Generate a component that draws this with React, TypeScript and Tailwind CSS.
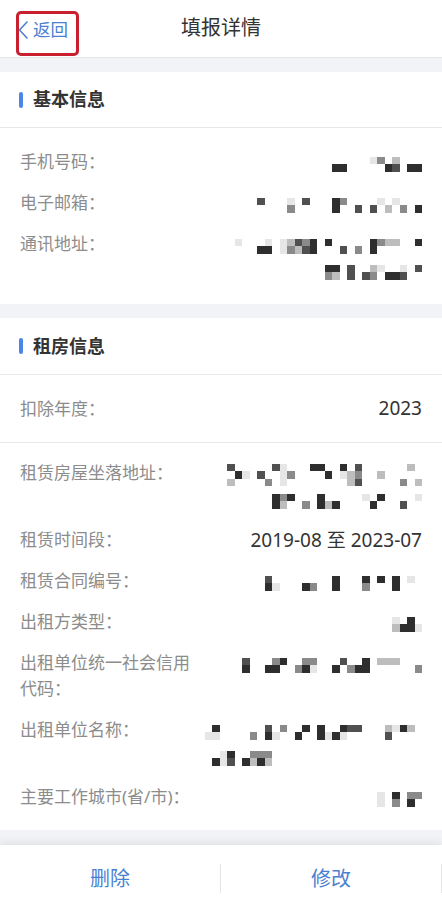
import React from 'react';

// 打码块的灰度
const shades: Record<string, string> = {
  a: 'bg-[#e6e6e6]',
  b: 'bg-[#bdbdbd]',
  c: 'bg-[#8a8a8a]',
  d: 'bg-[#505050]',
  e: 'bg-[#2e2e2e]',
};

type MosaicLine = string[];

function Mosaic({ lines }: { lines: MosaicLine[] }) {
  return (
    <div className="flex flex-col items-end">
      {lines.map((rows, i) => (
        <div key={i} className="h-[26px] flex flex-col justify-center pt-[4px]">
          {rows.map((row, j) => (
            <div key={j} className="flex">
              {row.split('').map((ch, k) => (
                <div key={k} className={`w-[7.5px] h-[7.5px] ${shades[ch] ?? ''}`} />
              ))}
            </div>
          ))}
        </div>
      ))}
    </div>
  );
}

function Row({ label, children }: { label: string; children: React.ReactNode }) {
  return (
    <div className="flex px-5 py-[7.5px]">
      <div className="w-[184px] shrink-0 text-[17px] leading-[26px] text-[#8c8c8c]">{label}</div>
      <div className="flex-1 flex justify-end">{children}</div>
    </div>
  );
}

function SectionTitle({ title, tall }: { title: string; tall?: boolean }) {
  return (
    <div className={`${tall ? 'h-[57px]' : 'h-[56px]'} flex items-center gap-[10px] px-[19px] border-b border-[#e8e8e8]`}>
      <div className="w-[4px] h-[16px] rounded-full bg-[#4a86e8]" />
      <span className="text-[18px] font-bold text-[#333]">{title}</span>
    </div>
  );
}

export default function App() {
  return (
    <div className="w-[442px] h-[912px] flex flex-col bg-[#f2f3f7] font-['Noto_Sans','Noto_Sans_CJK_SC',sans-serif] overflow-hidden">
      {/* 顶部导航 */}
      <div className="h-[58px] shrink-0 bg-white border-b border-[#e5e5e5] grid grid-cols-[1fr_auto_1fr]">
        <div className="pl-[16px] pt-[11px]">
          <div className="w-[63px] h-[45px] border-[3px] border-[#c8202f] rounded-[5px] flex items-center pb-[7px]">
            <svg className="w-[10px] h-[18px] -ml-[1px]" viewBox="0 0 10 18" fill="none" stroke="#4b7fd1" strokeWidth="1.6" strokeLinecap="round" strokeLinejoin="round">
              <path d="M9 1L1.5 9L9 17" />
            </svg>
            <span className="ml-[5px] text-[17.5px] leading-none text-[#4b7fd1]">返回</span>
          </div>
        </div>
        <div className="flex items-center pb-[1px] text-[20px] text-[#333]">填报详情</div>
        <div />
      </div>

      <div className="h-[14px] shrink-0" />

      {/* 基本信息 */}
      <div className="bg-white shrink-0">
        <SectionTitle title="基本信息" />
        <div className="pt-[13.5px] pb-[13.5px]">
          <Row label="手机号码：">
            <Mosaic lines={[['.....ac.b...', 'ee.....ed.ee']]} />
          </Row>
          <Row label="电子邮箱：">
            <Mosaic lines={[['d...a.d...ec....a.a...', '....c.....e..d.d.b.c.e']]} />
          </Row>
          <Row label="通讯地址：">
            <Mosaic
              lines={[
                ['a...a.abdce.e.....ecbb..e', '...ee.acbde...d.c.e......'],
                ['ee.d..ba..a.d', 'cb.d.dc.eed..'],
              ]}
            />
          </Row>
        </div>
      </div>

      <div className="h-[14px] shrink-0" />

      {/* 租房信息 */}
      <div className="bg-white shrink-0">
        <SectionTitle title="租房信息" tall />
        <div className="h-[68px] flex items-center justify-between px-5 border-b border-[#e8e8e8]">
          <span className="text-[17px] text-[#8c8c8c]">扣除年度：</span>
          <span className="text-[19px] text-[#333]">2023</span>
        </div>
        <div className="pt-[9.5px] pb-[12.5px]">
          <Row label="租赁房屋坐落地址：">
            <Mosaic
              lines={[
                ['d.....da...ee..e.d......b.', '.ea.d..ac....e.abc..b.....', 'b....c.a........bd.....c.b'],
                ['ece...e.....a.e....a', 'eb..c.ebe....e...d..'],
              ]}
            />
          </Row>
          <Row label="租赁时间段：">
            <span className="text-[19px] leading-[26px] text-[#333]">2019-08 至 2023-07</span>
          </Row>
          <Row label="租赁合同编号：">
            <Mosaic lines={[['d........e...e.e.e.a.', 'ea...ec..e...c...e...']]} />
          </Row>
          <Row label="出租方类型：">
            <Mosaic lines={[['a.e.', 'beea']]} />
          </Row>
          <Row label="出租单位统一社会信用代码：">
            <Mosaic lines={[['d...ce..cc...d..e.bbb...', 'e..ee..cea..e.cee......c']]} />
          </Row>
          <Row label="出租单位名称：">
            <Mosaic
              lines={[
                ['.e......d.c..e.e..edd...baeb.', 'aa....c.ea..e..eaea.....d....'],
                ['..ae..ccc....................', '.ead.ebeb....................'],
              ]}
            />
          </Row>
          <Row label="主要工作城市(省/市)：">
            <Mosaic lines={[['a.e.cc', 'a.c.e.']]} />
          </Row>
        </div>
      </div>

      <div className="flex-1" />

      {/* 底部按钮 */}
      <div className="h-[67px] shrink-0 bg-white flex items-center shadow-[0_-3px_8px_rgba(0,0,0,0.07)]">
        <button className="flex-1 h-full flex items-center justify-center text-[20px] text-[#4b7fd1]">删除</button>
        <div className="w-px h-[29px] bg-[#e5e5e5]" />
        <button className="flex-1 h-full flex items-center justify-center text-[20px] text-[#4b7fd1]">修改</button>
        <div className="w-px h-[29px] bg-[#e5e5e5]" />
      </div>
    </div>
  );
}
